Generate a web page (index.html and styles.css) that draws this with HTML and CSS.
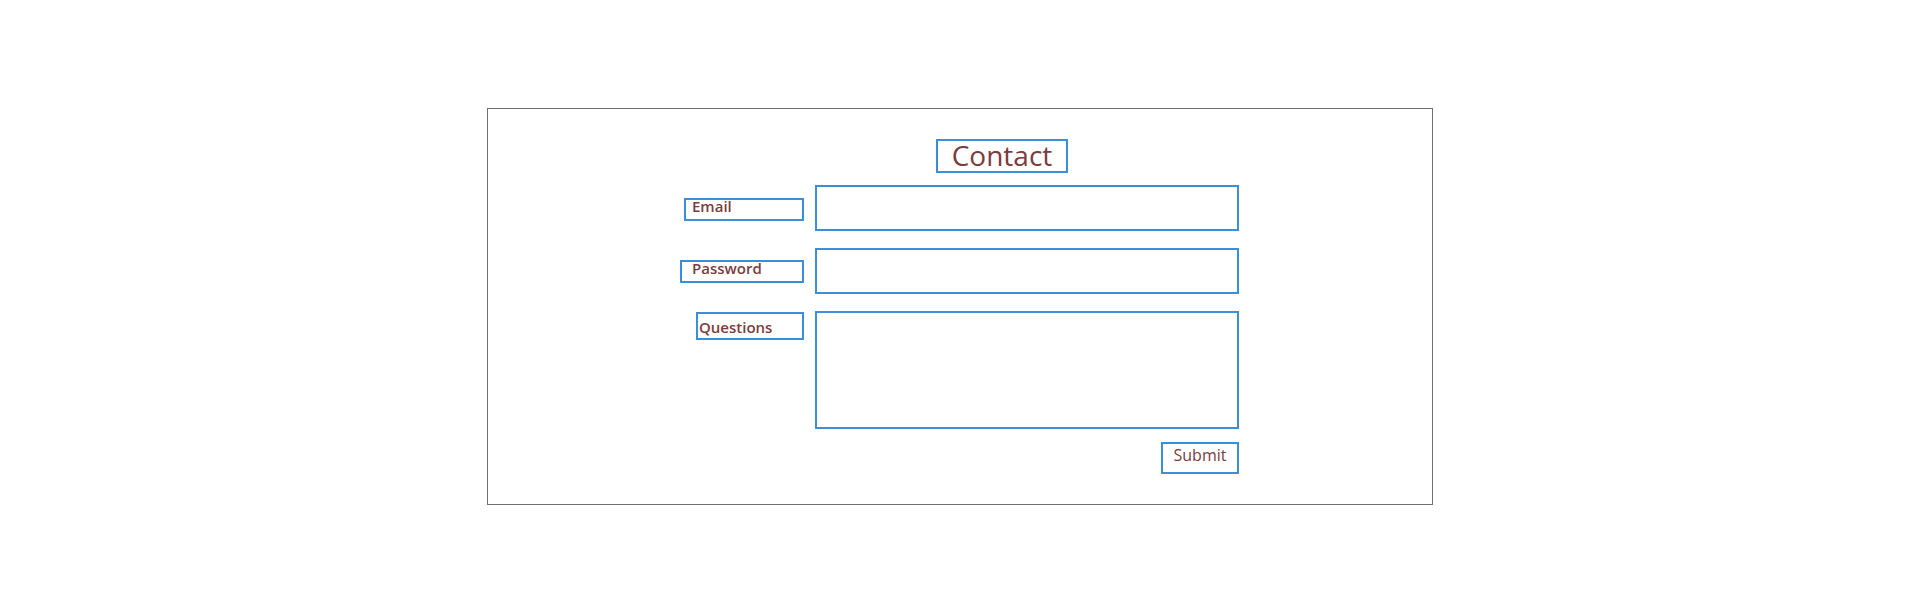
FILE: index.html
```html
<!DOCTYPE html>
<html lang="en">
<head>
<meta charset="utf-8">
<title>Contact</title>
<link rel="stylesheet" href="styles.css">
</head>
<body>
  <main class="card">
    <h1 class="title">Contact</h1>
    <form class="form">
      <label class="label label--email" for="email">Email</label>
      <input class="field" id="email" type="email">
      <label class="label label--password" for="password">Password</label>
      <input class="field" id="password" type="password">
      <label class="label label--questions" for="questions">Questions</label>
      <textarea class="field field--area" id="questions"></textarea>
      <button class="submit" type="submit">Submit</button>
    </form>
  </main>
</body>
</html>
```

FILE: styles.css
```css
* { box-sizing: border-box; }

html, body {
  margin: 0;
  padding: 0;
  background: #ffffff;
}

body {
  font-family: "Open Sans", "Noto Sans", sans-serif;
  color: #7a3d3d;
}

.card {
  width: 946px;
  height: 397px;
  margin: 108px auto 0;
  border: 1px solid #707070;
  padding-top: 30px;
  display: flex;
  flex-direction: column;
  align-items: flex-start;
}

.title {
  margin: 0 0 12px 448px;
  width: 132px;
  border: 2px solid #3a8fd8;
  font-size: 28px;
  font-weight: 400;
  line-height: 28px;
  padding: 0 0 2px;
  text-align: center;
  color: #7a3d3d;
}

.form {
  margin-left: 192px;
  display: grid;
  grid-template-columns: 124px 424px;
  column-gap: 11px;
  row-gap: 17px;
}

.label {
  justify-self: end;
  align-self: start;
  border: 2px solid #3a8fd8;
  font-size: 15px;
  font-weight: 600;
  line-height: 12px;
  padding-bottom: 7px;
  white-space: nowrap;
}

.label--email {
  width: 120px;
  margin-top: 13px;
  padding-left: 6px;
}

.label--password {
  width: 124px;
  margin-top: 12px;
  padding-left: 10px;
}

.label--questions {
  width: 108px;
  margin-top: 1px;
  padding: 7px 0 5px 1px;
}

.field {
  display: block;
  width: 424px;
  height: 46px;
  margin: 0;
  border: 2px solid #3a8fd8;
  border-radius: 0;
  background: #ffffff;
  font-family: inherit;
  font-size: 15px;
  outline: none;
}

.field--area {
  height: 118px;
  resize: none;
}

.submit {
  grid-column: 2;
  justify-self: end;
  margin-top: -4px;
  width: 78px;
  border: 2px solid #3a8fd8;
  border-radius: 0;
  background: #ffffff;
  color: #7a3d3d;
  font-family: "Open Sans", "Noto Sans", sans-serif;
  font-size: 16px;
  font-weight: 400;
  line-height: 22px;
  padding: 0 0 6px;
  text-align: center;
}
```
